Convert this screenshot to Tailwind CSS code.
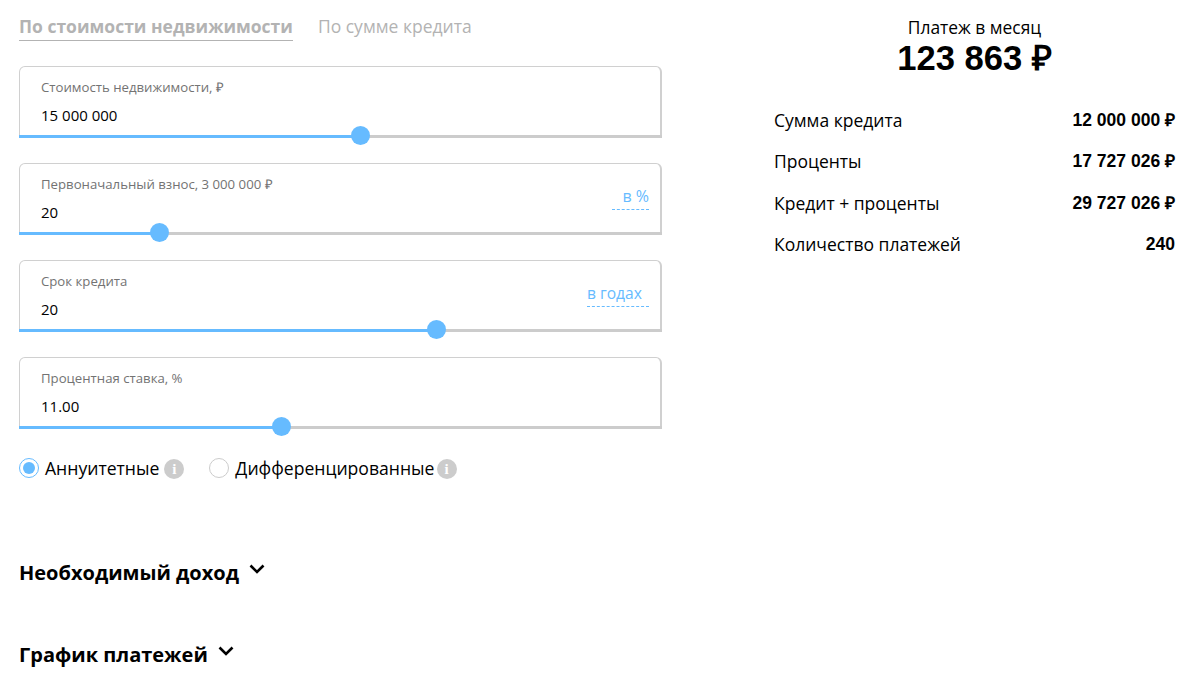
<!DOCTYPE html>
<html lang="ru">
<head>
    <meta charset="UTF-8">
    <title>Ипотечный калькулятор</title>
    <script src="https://cdn.jsdelivr.net/npm/@tailwindcss/browser@4"></script>
</head>
<body class="bg-white h-[681px] overflow-hidden font-['Open_Sans',sans-serif] text-black">
    <div class="flex pl-[19px]">
        <div class="w-[643px]">
            <div class="flex h-[41px] pt-[13px] text-[17.5px] leading-[26px]">
                <div class="h-[28px] border-b border-[#b3b3b3] font-bold text-[#b3b3b3]">По стоимости недвижимости</div>
                <div class="ml-[25px] text-[#b3b3b3]">По сумме кредита</div>
            </div>

            <div class="flex flex-col gap-[25px] mt-[25px]">
                <div class="relative h-[72px] rounded-t-[6px] border border-r-2 border-[#d0d0d0] border-b-0">
                    <div class="pl-[21px] pt-[11px] text-[13.2px] leading-[18px] text-[#737373]">Стоимость недвижимости, ₽</div>
                    <div class="pl-[21px] pt-[9px] text-[15px] leading-[20px]">15 000 000</div>
                    <div class="absolute -left-px -right-[2px] bottom-0 h-[3px] bg-[#cccccc]"><div class="h-full w-[342px] bg-[#66bbff]"></div></div>
                    <div class="absolute left-[331px] bottom-[-7px] size-[19px] rounded-full bg-[#66bbff]"></div>
                </div>

                <div class="relative h-[72px] rounded-t-[6px] border border-r-2 border-[#d0d0d0] border-b-0">
                    <div class="pl-[21px] pt-[11px] text-[13.2px] leading-[18px] text-[#737373]">Первоначальный взнос, 3 000 000 ₽</div>
                    <div class="pl-[21px] pt-[9px] text-[15px] leading-[20px]">20</div>
                    <div class="absolute right-[11px] top-[21px] w-[37px] h-[25px] border-b border-dashed border-[#66bbff] text-right text-[16px] leading-[22px] text-[#66bbff]">в %</div>
                    <div class="absolute -left-px -right-[2px] bottom-0 h-[3px] bg-[#cccccc]"><div class="h-full w-[140px] bg-[#66bbff]"></div></div>
                    <div class="absolute left-[130px] bottom-[-7px] size-[19px] rounded-full bg-[#66bbff]"></div>
                </div>

                <div class="relative h-[72px] rounded-t-[6px] border border-r-2 border-[#d0d0d0] border-b-0">
                    <div class="pl-[21px] pt-[11px] text-[13.2px] leading-[18px] text-[#737373]">Срок кредита</div>
                    <div class="pl-[21px] pt-[9px] text-[15px] leading-[20px]">20</div>
                    <div class="absolute right-[11px] top-[21px] w-[62px] h-[25px] border-b border-dashed border-[#66bbff] text-[15.6px] leading-[22px] text-[#66bbff]">в годах</div>
                    <div class="absolute -left-px -right-[2px] bottom-0 h-[3px] bg-[#cccccc]"><div class="h-full w-[417px] bg-[#66bbff]"></div></div>
                    <div class="absolute left-[407px] bottom-[-7px] size-[19px] rounded-full bg-[#66bbff]"></div>
                </div>

                <div class="relative h-[72px] rounded-t-[6px] border border-r-2 border-[#d0d0d0] border-b-0">
                    <div class="pl-[21px] pt-[11px] text-[13.2px] leading-[18px] text-[#737373]">Процентная ставка, %</div>
                    <div class="pl-[21px] pt-[9px] text-[15px] leading-[20px]">11.00</div>
                    <div class="absolute -left-px -right-[2px] bottom-0 h-[3px] bg-[#cccccc]"><div class="h-full w-[262px] bg-[#66bbff]"></div></div>
                    <div class="absolute left-[252px] bottom-[-7px] size-[19px] rounded-full bg-[#66bbff]"></div>
                </div>
            </div>

            <div class="flex items-center mt-[27px] h-[24px] text-[17.6px]">
                <span class="flex items-center justify-center size-[20px] rounded-full border border-[#66bbff]"><span class="size-[12px] rounded-full bg-[#66bbff]"></span></span>
                <span class="ml-[6px]">Аннуитетные</span>
                <span class="ml-[5px] mt-[2px] flex items-center justify-center size-[20px] rounded-full bg-[#cccccc] font-['Liberation_Serif',serif] font-bold text-[15px] leading-none text-white">i</span>
                <span class="ml-[25px] size-[20px] rounded-full border border-[#cccccc]"></span>
                <span class="ml-[6px]">Дифференцированные</span>
                <span class="ml-[2px] mt-[2px] flex items-center justify-center size-[20px] rounded-full bg-[#cccccc] font-['Liberation_Serif',serif] font-bold text-[15px] leading-none text-white">i</span>
            </div>

            <div class="flex items-start mt-[79px] h-[28px] text-[20px] font-bold leading-[28px]">
                Необходимый доход
                <svg class="ml-[10px] mt-[5px]" width="16" height="10" viewBox="0 0 16 10" fill="none" stroke="#000" stroke-width="2.6"><path d="M1.5 1.5 8 8l6.5-6.5"/></svg>
            </div>
            <div class="flex items-start mt-[54px] h-[28px] text-[20px] font-bold leading-[28px]">
                График платежей
                <svg class="ml-[10px] mt-[5px]" width="16" height="10" viewBox="0 0 16 10" fill="none" stroke="#000" stroke-width="2.6"><path d="M1.5 1.5 8 8l6.5-6.5"/></svg>
            </div>
        </div>

        <div class="w-[401px] ml-[112px]">
            <div class="pt-[15px] text-center text-[17.4px] leading-[24px]">Платеж в месяц</div>
            <div class="text-center font-['Liberation_Sans',sans-serif] font-bold text-[34.6px] leading-[38px]">123 863 ₽</div>
            <div class="mt-[22px] flex flex-col text-[17.5px]">
                <div class="flex justify-between items-center h-[41.6px]"><span>Сумма кредита</span><span class="font-['Liberation_Sans',sans-serif] font-bold">12 000 000 ₽</span></div>
                <div class="flex justify-between items-center h-[41.6px]"><span>Проценты</span><span class="font-['Liberation_Sans',sans-serif] font-bold">17 727 026 ₽</span></div>
                <div class="flex justify-between items-center h-[41.6px]"><span>Кредит + проценты</span><span class="font-['Liberation_Sans',sans-serif] font-bold">29 727 026 ₽</span></div>
                <div class="flex justify-between items-center h-[41.6px]"><span>Количество платежей</span><span class="font-['Liberation_Sans',sans-serif] font-bold">240</span></div>
            </div>
        </div>
    </div>
</body>
</html>
